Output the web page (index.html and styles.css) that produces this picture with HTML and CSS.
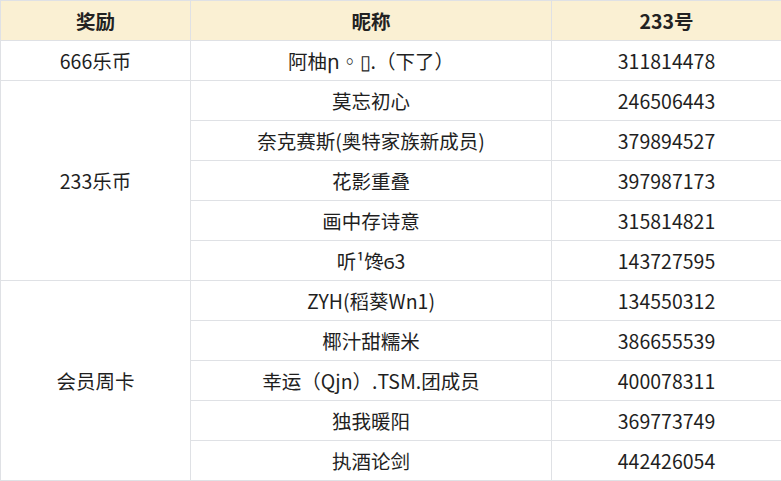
FILE: index.html
```html
<!DOCTYPE html>
<html lang="zh">
<head>
<meta charset="utf-8">
<link rel="stylesheet" href="styles.css">
</head>
<body>
<table class="tbl">
  <colgroup>
    <col class="c1"><col class="c2"><col class="c3">
  </colgroup>
  <thead>
    <tr><th>奖励</th><th>昵称</th><th>233号</th></tr>
  </thead>
  <tbody>
    <tr><td>666乐币</td><td>阿柚ր◦▯.（下了）</td><td>311814478</td></tr>
    <tr><td rowspan="5">233乐币</td><td>莫忘初心</td><td>246506443</td></tr>
    <tr><td>奈克赛斯(奥特家族新成员)</td><td>379894527</td></tr>
    <tr><td>花影重叠</td><td>397987173</td></tr>
    <tr><td>画中存诗意</td><td>315814821</td></tr>
    <tr><td>听¹馋ϭ3</td><td>143727595</td></tr>
    <tr><td rowspan="5">会员周卡</td><td>ZYH(稻葵Wn1)</td><td>134550312</td></tr>
    <tr><td>椰汁甜糯米</td><td>386655539</td></tr>
    <tr><td>幸运（Qjn）.TSM.团成员</td><td>400078311</td></tr>
    <tr><td>独我暖阳</td><td>369773749</td></tr>
    <tr><td>执酒论剑</td><td>442426054</td></tr>
  </tbody>
</table>
</body>
</html>
```
FILE: styles.css
```css
html, body {
  margin: 0;
  padding: 0;
  background: #ffffff;
}
.tbl {
  border-collapse: collapse;
  width: 781px;
  table-layout: fixed;
  font-family: "Noto Sans CJK SC", "Noto Sans", sans-serif;
  font-size: 19.5px;
  color: #1f1f1f;
}
.c1 { width: 190px; }
.c2 { width: 361px; }
.c3 { width: 230px; }
.tbl tr { height: 40px; }
.tbl th, .tbl td {
  border: 1px solid #dfe1e5;
  text-align: center;
  vertical-align: middle;
  padding: 0;
  line-height: 20px;
  white-space: nowrap;
}
.tbl th {
  background: #faf0d3;
  font-weight: bold;
  color: #222222;
}
```
